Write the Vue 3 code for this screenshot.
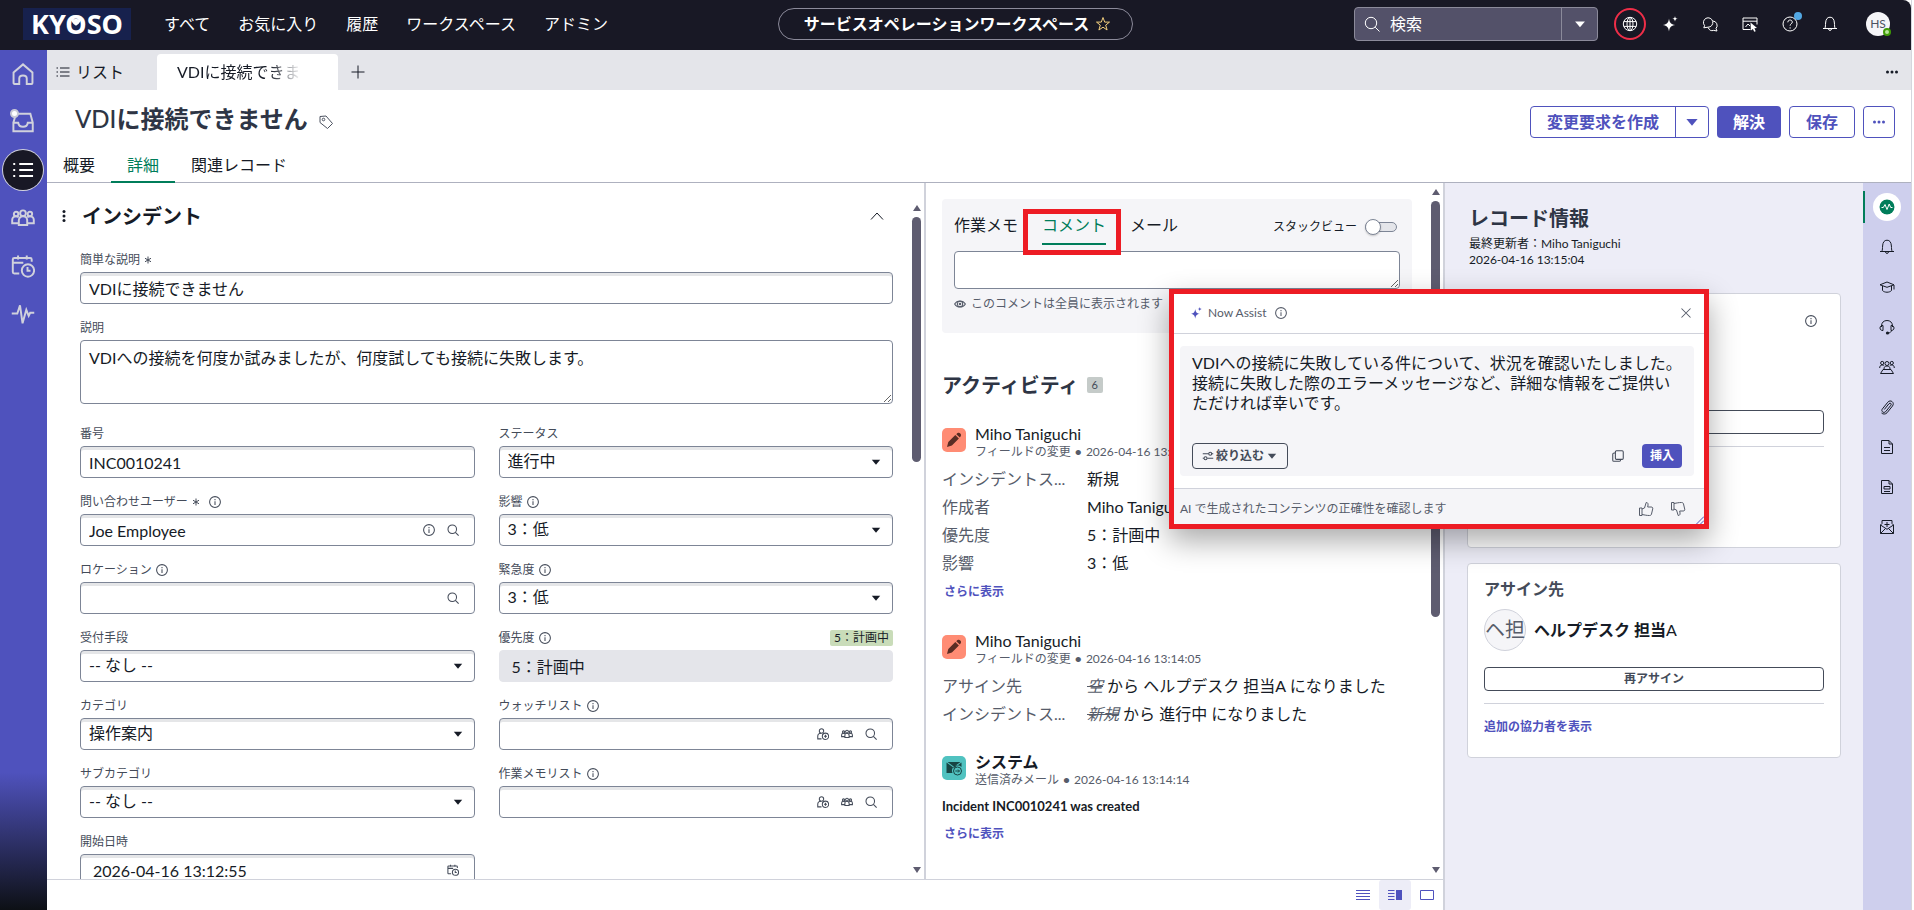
<template>
  <div class="workspace">
    <header class="topbar">
      <div class="logo">KY<span class="logo-o">O<svg class="logo-mark" viewBox="0 0 14 12"><path d="M1 0.5 L4.5 3.5 Q7 2 9.5 3.5 L13 0.5 Q13 8 7 11 Q1 8 1 0.5Z" /></svg></span>SO</div>
      <nav class="menu">
        <a v-for="m in menus" :key="m" href="#">{{ m }}</a>
      </nav>
      <button class="pill" type="button">
        サービスオペレーションワークスペース
        <Icon name="star" class="s16 gold" />
      </button>
      <div class="top-tools">
        <div class="search">
          <Icon name="search" class="s16" />
          <input type="text" placeholder="検索" aria-label="検索">
          <button class="search-more" type="button" aria-label="検索範囲"><Icon name="caret" class="s16" /></button>
        </div>
        <button class="tool ringed" type="button" aria-label="スコープ"><Icon name="globe" class="s16" /></button>
        <button v-for="t in tools" :key="t.icon" class="tool" type="button" :aria-label="t.label">
          <Icon :name="t.icon" class="s16" />
          <span v-if="t.dot" class="tool-dot"></span>
        </button>
        <button class="avatar" type="button">HS<span class="online"></span></button>
      </div>
    </header>

    <div class="shell">
      <nav class="sidebar">
        <a v-for="s in sideItems" :key="s.icon" href="#" class="side-link" :class="{ active: s.active }" :aria-label="s.label">
          <Icon :name="s.icon" class="s24" />
          <span v-if="s.dot" class="side-dot"></span>
        </a>
      </nav>

      <main class="main">
        <div class="tabbar">
          <button class="list-tab" type="button"><Icon name="list" class="s16" />リスト</button>
          <button class="record-tab" type="button"><span>VDIに接続できま</span></button>
          <button class="add-tab" type="button" aria-label="タブを追加"><Icon name="plus" class="s16" /></button>
          <button class="more-tab" type="button" aria-label="その他"><Icon name="dots" class="s16" /></button>
        </div>

        <div class="record-head">
          <div class="title-row">
            <h1><span>VDI</span>に接続できません</h1>
            <Icon name="tag" class="s16 tag-icon" />
            <div class="actions">
              <div class="split">
                <button type="button">変更要求を作成</button>
                <button type="button" class="split-caret" aria-label="その他の作成"><Icon name="caret" class="s16" /></button>
              </div>
              <button type="button" class="btn primary">解決</button>
              <button type="button" class="btn">保存</button>
              <button type="button" class="btn square" aria-label="その他"><Icon name="dots" class="s16" /></button>
            </div>
          </div>
          <div class="record-tabs">
            <button type="button">概要</button>
            <button type="button" class="active">詳細</button>
            <button type="button">関連レコード</button>
          </div>
        </div>

        <div class="body">
          <div class="left-area">
            <div class="panes">
              <section class="form-pane">
                <div class="form-scroll">
                  <div class="section-head">
                    <Icon name="vdots" class="s16" />
                    <h2>インシデント</h2>
                    <button type="button" class="plain" aria-label="折りたたむ"><Icon name="chevron" class="s16" /></button>
                  </div>
                  <div class="fields">
                    <div class="field wide">
                      <div class="label-row"><label for="short">簡単な説明</label><Icon name="required" class="s8" /></div>
                      <div class="control"><input id="short" type="text" value="VDIに接続できません"></div>
                    </div>
                    <div class="field wide">
                      <div class="label-row"><label for="desc">説明</label></div>
                      <textarea id="desc" class="desc">VDIへの接続を何度か試みましたが、何度試しても接続に失敗します。</textarea>
                    </div>
                    <div v-for="f in fields" :key="f.id" class="field">
                      <div class="label-row">
                        <label :for="f.id">{{ f.label }}</label>
                        <Icon v-if="f.required" name="required" class="s8" />
                        <Icon v-if="f.info" name="info" class="s12" :class="{ spaced: f.required }" />
                        <span v-if="f.chip" class="chip">{{ f.chip }}</span>
                      </div>
                      <div class="control" :class="f.type">
                        <template v-if="f.type === 'select'">
                          <select :id="f.id"><option>{{ f.value }}</option></select>
                          <Icon name="caret" class="s12 ink" />
                        </template>
                        <template v-else>
                          <input :id="f.id" type="text" :value="f.value" :readonly="f.type === 'readonly'">
                          <Icon v-for="i in f.icons" :key="i" :name="i" class="s12" />
                        </template>
                      </div>
                    </div>
                  </div>
                </div>
                <div class="scroll form-bar"><i class="up"></i><div class="track"><div class="thumb"></div></div><i class="down"></i></div>
              </section>

              <section class="activity-pane">
                <div class="activity-scroll">
                  <div class="compose">
                    <div class="compose-tabs">
                      <button type="button">作業メモ</button>
                      <button type="button" class="active">コメント</button>
                      <button type="button">メール</button>
                      <label class="stack">スタックビュー<input type="checkbox" role="switch"></label>
                    </div>
                    <textarea class="comment" aria-label="コメント"></textarea>
                    <p class="hint"><Icon name="eye" class="s12" />このコメントは全員に表示されます</p>
                  </div>
                  <h2 class="activity-title">アクティビティ<span>6</span></h2>
                  <article v-for="(e, n) in entries" :key="n" class="entry">
                    <header>
                      <span class="entry-icon" :class="e.icon"><Icon :name="e.icon" class="s16" /></span>
                      <div>
                        <div class="entry-name" :class="{ bold: e.bold }">{{ e.name }}</div>
                        <div class="entry-sub">{{ e.kind }} <b>•</b> {{ e.time }}</div>
                      </div>
                    </header>
                    <dl v-if="e.rows">
                      <div v-for="r in e.rows" :key="r.label">
                        <dt>{{ r.label }}</dt>
                        <dd><template v-if="r.old"><del>{{ r.old }}</del> から </template>{{ r.value }}</dd>
                      </div>
                    </dl>
                    <p v-if="e.text" class="entry-text">{{ e.text }}</p>
                    <a v-if="e.more" href="#" class="link">さらに表示</a>
                  </article>
                </div>
                <div class="scroll activity-bar"><i class="up"></i><div class="track"><div class="thumb"></div></div><i class="down"></i></div>
              </section>
            </div>
            <footer class="layout-bar">
              <button type="button" aria-label="一列"><Icon name="rows" class="s16" /></button>
              <button type="button" class="active" aria-label="分割"><Icon name="split" class="s16" /></button>
              <button type="button" aria-label="全画面"><Icon name="box" class="s16" /></button>
            </footer>
          </div>

          <aside class="info-pane">
            <h2>レコード情報</h2>
            <p>最終更新者：Miho Taniguchi<br>2026-04-16 13:15:04</p>
            <div class="card sla">
              <Icon name="info" class="s12" />
              <button type="button" class="outline" aria-label="詳細"></button>
              <hr>
            </div>
            <div class="card">
              <h3>アサイン先</h3>
              <div class="person">
                <span class="face">ヘ担</span>
                <strong>ヘルプデスク 担当<span>A</span></strong>
              </div>
              <button type="button" class="outline">再アサイン</button>
              <hr>
              <a href="#" class="link">追加の協力者を表示</a>
            </div>
          </aside>

          <nav class="rail">
            <button v-for="r in rail" :key="r.icon" type="button" :class="{ active: r.active }" :aria-label="r.label">
              <Icon :name="r.icon" class="s16" />
            </button>
          </nav>

          <div class="assist" role="dialog" aria-label="Now Assist">
            <div class="assist-head">
              <Icon name="sparkle" class="s12 violet" />
              <span>Now Assist</span>
              <Icon name="info" class="s12" />
              <button type="button" class="plain" aria-label="閉じる"><Icon name="close" class="s12" /></button>
            </div>
            <div class="assist-body">
              <p>VDIへの接続に失敗している件について、状況を確認いたしました。<br>接続に失敗した際のエラーメッセージなど、詳細な情報をご提供いただければ幸いです。</p>
              <div class="assist-actions">
                <button type="button" class="refine"><Icon name="sliders" class="s12" />絞り込む<Icon name="caret" class="s12" /></button>
                <button type="button" class="plain copy" aria-label="コピー"><Icon name="copy" class="s12" /></button>
                <button type="button" class="insert">挿入</button>
              </div>
            </div>
            <div class="assist-foot">
              <span>AI で生成されたコンテンツの正確性を確認します</span>
              <button type="button" class="plain" aria-label="良い"><Icon name="up" class="s16" /></button>
              <button type="button" class="plain" aria-label="悪い"><Icon name="downvote" class="s16" /></button>
            </div>
            <Icon name="grip" class="s8 grip" />
          </div>
        </div>
      </main>
    </div>
  </div>
</template>

<script setup>
import { h } from 'vue'

// 16x16 の線画アイコン
const icons = {
  star: '<path d="M8 1.5l1.7 4.6h4.8l-3.8 3 1.4 4.9L8 11.2 3.9 14l1.4-4.9-3.8-3h4.8z"/>',
  search: '<circle cx="7" cy="7" r="5.7"/><path d="M11.2 11.2l4.300 4.300"/>',
  caret: '<path class="fill" d="M2.4 5h11.200L8 11.8z"/>',
  globe: '<circle cx="8" cy="8" r="6.7"/><ellipse cx="8" cy="8" rx="3" ry="6.7"/><path d="M8 1.3v13.4M1.8 5.6h12.4M1.8 10.4h12.4"/>',
  sparkle: '<path class="fill" d="M7 2.5C7.6 6.6 8.9 8.3 13.2 9 8.9 9.7 7.6 11.4 7 15.5 6.4 11.4 5.1 9.7.8 9 5.1 8.3 6.4 6.6 7 2.5zM13 0c.3 1.8.8 2.5 2.8 2.800-2 .3-2.500 1-2.800 2.800-.3-1.800-.8-2.500-2.800-2.800 2-.3 2.500-1 2.800-2.800z"/>',
  chats: '<path d="M2.600 9.600A4.700 4.700 0 1 1 6 11.200l-4.200.6z"/><path d="M10.800 5a4.500 4.500 0 0 1 3.200 7.500l1 2.500-3.300-.6a4.500 4.500 0 0 1-5.500-2.800"/>',
  pointer: '<path d="M8.500 13.500H1V2h14v6.500M1 5.200h14M3.500 11l2.500-3 2 2"/><path class="fill" d="M8.500 6.500l6.500 5.500-2.600.3 1.300 2.900-1.500.6-1.300-2.800-2 1.600z"/>',
  help: '<circle cx="8" cy="8" r="7"/><path d="M5.800 6.300c0-3 4.500-3 4.500-.2 0 1.700-2.200 1.700-2.200 3.600M8.100 11.300v1.300"/>',
  bell: '<path d="M1 12.500h14M2.800 12.500c.8-1.500.6-3.500.8-5.500C3.800 3.200 5.300 1.200 8 1.200S12.200 3.200 12.400 7c.2 2 0 4 .8 5.500M6.500 13c.2 1.900 2.800 1.900 3 0"/>',
  home: '<path d="M1.700 7L8 1.600 14.300 7v7c0 .4-.2.600-.6.600H10.500V11c0-1.300-.9-2-2.500-2s-2.500.7-2.500 2v3.600H2.300c-.4 0-.6-.2-.6-.6z"/>',
  inbox: '<path d="M3.300 2.500h9.600l1.600 6v5.700H1.600V8.500h3.200c.3 2 1.300 2.700 3.200 2.700s2.900-.7 3.200-2.700h3.300M3 3.500L1.600 8.500"/>',
  menu: '<path d="M5.500 4h9.200M5.500 8h9.200M5.500 12h9.200M1.500 4h1.300M1.500 8h1.300M1.500 12h1.300"/>',
  list: '<path d="M5 4h9.500M5 8h9.500M5 12h9.500M1.500 4H3M1.500 8H3M1.500 12H3"/>',
  people: '<circle cx="8" cy="4.800" r="1.900"/><circle cx="3.400" cy="5.300" r="1.500"/><circle cx="12.600" cy="5.300" r="1.500"/><path d="M5.200 12.600V9.700C5.200 7.900 6.300 6.900 8 6.900s2.800 1 2.800 2.800v2.900zM5 11.500H.8V9.400C.8 7.700 1.800 6.900 3.400 6.900c.8 0 1.300.2 1.700.6M11 11.500h4.200V9.400c0-1.700-1-2.500-2.600-2.500-.8 0-1.300.2-1.700.6"/>',
  calendar: '<path d="M5.500 13H2.200c-.7 0-1-.3-1-1V3.700c0-.7.300-1 1-1h10.600c.7 0 1 .3 1 1v1.500M1.200 5.800h7M4.700 1v2.700M10.500 1v2.700"/><circle cx="11.300" cy="11" r="4.100"/><path d="M11 8.700v2.500h2"/>',
  pulse: '<path d="M.5 7.700h3.700L6 2.200l1.700 12 2.500-9 1.600 4 1-2h2.700"/>',
  plus: '<path d="M8 1.500v13M1.500 8h13"/>',
  dots: '<g class="fill"><circle cx="3.500" cy="8" r="1.500"/><circle cx="8" cy="8" r="1.500"/><circle cx="12.500" cy="8" r="1.500"/></g>',
  vdots: '<g class="fill"><circle cx="8" cy="3.500" r="1.500"/><circle cx="8" cy="8" r="1.500"/><circle cx="8" cy="12.500" r="1.500"/></g>',
  tag: '<path d="M2 2.500l6-.5 6.500 7.500-5 5L2 8.500z"/><circle cx="5.500" cy="5.500" r="1.300"/>',
  chevron: '<path d="M2 11.500l6-6.500 6 6.500"/>',
  required: '<path d="M8 1v14M2 4.500l12 7M14 4.500l-12 7"/>',
  info: '<circle cx="8" cy="8" r="7.200"/><path d="M8 7v5M8 4v1.600"/>',
  adduser: '<circle cx="6" cy="4" r="2.900"/><path d="M6 14.500H1V11c0-2.500 1.500-4 4.500-4M8 7l1 .5"/><circle cx="11.300" cy="11" r="4.200"/><path d="M9.300 11h4M11.300 9v4"/>',
  eye: '<path d="M.8 8C4 2.500 12 2.500 15.200 8 12 13.500 4 13.500.8 8z"/><circle cx="8" cy="8" r="3.600"/><circle cx="8" cy="8" r="1"/>',
  pencil: '<path class="fill" d="M1 15l1.300-5 7-7 3.600 3.600-7 7zM10.300 2.200C12 .3 13.300.5 14.300 1.500s1.200 2.300-.5 4z"/>',
  mail: '<path class="fill" d="M.5 2.500L8 8l7.500-5.500V7A5.500 5.500 0 0 0 6.500 13H.5zM1.500 2h13L8 6.800z"/><circle cx="11.500" cy="11" r="4"/><path d="M9.300 11h4M12 9.500l1.500 1.500-1.500 1.500"/>',
  rows: '<path d="M1 3.500h14M1 6.500h14M1 9.500h14M1 12.500h14"/>',
  split: '<path d="M1 3.500h6.500M1 6.500h6.500M1 9.500h6.500M1 12.500h6.500"/><path class="fill" d="M9 3h6v10H9z"/>',
  box: '<path d="M1.500 3.500h13v9h-13z"/>',
  close: '<path d="M2 2l12 12M14 2L2 14"/>',
  sliders: '<path d="M1 5h8M13 5h2M1 11h1.500M7 11h8"/><circle cx="11" cy="5" r="2"/><circle cx="4.700" cy="11" r="2"/>',
  copy: '<rect x="4.500" y="1" width="10.500" height="11.500" rx="1.500"/><path d="M4.500 4H3C1.700 4 1 4.700 1 6v7.500C1 14.600 1.500 15 2.500 15H10c1 0 1.500-.7 1.500-2.500"/>',
  up: '<path d="M1.500 7H4v7.500H1.500zM4 8l2.500-1 1.700-5.500c1.800 0 2.300 1.300 1.500 4.500H13c1.500 0 2 .7 1.700 2l-1.200 5c-.2 1-.8 1.500-2 1.500-3 0-4.500-.5-7.500-1"/>',
  downvote: '<path d="M1.500 9H4V1.500H1.500zM4 8l2.500 1 1.700 5.500c1.800 0 2.300-1.300 1.500-4.500H13c1.500 0 2-.7 1.700-2l-1.200-5c-.2-1-.8-1.500-2-1.500-3 0-4.500.5-7.500 1"/>',
  grip: '<path d="M1 16L16 1M9 16l7-7"/>',
  beat: '<circle class="fill" cx="8" cy="8" r="7.500"/><path class="beat" d="M2.500 8.500h1.800L6 5.500l2 5 2.200-5.500 1.500 3.500h1.800"/>',
  cap: '<path d="M1 5.800L8 3l7 2.800L8 8.300z"/><path d="M3.500 7v4.500c2 2.300 7 2.300 9 0V7M15 6v4.500"/>',
  headset: '<path d="M2.500 8V7C2.500 3.500 4.800 1.500 8 1.500s5.500 2 5.500 5.500v1M4 6.500v5c-1.800 0-3-.8-3-2.500s1.200-2.500 3-2.500zM12 6.500v5c1.800 0 3-.8 3-2.500s-1.200-2.500-3-2.500zM12.500 11.500c-.5 1.700-1.500 2.500-3.500 2.500"/><circle class="fill" cx="8.500" cy="14" r="1.600"/>',
  team: '<circle cx="8" cy="4.500" r="2"/><circle cx="3.200" cy="4" r="1.600"/><circle cx="12.800" cy="4" r="1.600"/><path d="M5 10c0-2 1-3 3-3s3 1 3 3M.7 9C.7 7 1.600 6 3.200 6c1 0 1.600.3 2 .8M15.300 9c0-2-.9-3-2.500-3-1 0-1.600.3-2 .8M4 10.500h8l2.500 4h-13z"/>',
  clip: '<path d="M5.300 10.500l4.700-5.800c1.200-1.400 3 .1 1.900 1.500L6.800 12.500c-2 2.300-5.300-.2-3.400-2.600L8.800 3.200c2.700-3.200 7.300.4 4.700 3.800L8 13.800c-1.500 1.600-4 1.600-5.500.2"/>',
  doc: '<path d="M2.500 1.500H10l3.500 3.500v9.500h-11zM10 1.500V5h3.500M5 8.500h6M5 11.500h6"/>',
  form: '<path d="M2.500 1.500H10l3.500 3.500v9.500h-11zM10 1.500V5h3.500M5 7.500h6v2.500H5zM5 12.500h6"/>',
  envelope: '<path d="M1.500 6v8.500h13V6M1.500 6L3 4.500v-3h10v3L14.500 6 8 10.300zM1.500 14.500l5-5M14.500 14.500l-5-5M8 3v5M5.500 5.500h5"/>',
}

const Icon = (props) => h('svg', { viewBox: '0 0 16 16', class: 'icon', 'aria-hidden': 'true', innerHTML: icons[props.name] })
Icon.props = ['name']

const menus = ['すべて', 'お気に入り', '履歴', 'ワークスペース', 'アドミン']

const tools = [
  { icon: 'sparkle', label: 'Now Assist' },
  { icon: 'chats', label: 'チャット' },
  { icon: 'pointer', label: 'ガイド' },
  { icon: 'help', label: 'ヘルプ', dot: true },
  { icon: 'bell', label: '通知' },
]

const sideItems = [
  { icon: 'home', label: 'ホーム' },
  { icon: 'inbox', label: '受信トレイ', dot: true },
  { icon: 'menu', label: 'リスト', active: true },
  { icon: 'people', label: 'チーム' },
  { icon: 'calendar', label: 'スケジュール' },
  { icon: 'pulse', label: '分析' },
]

const fields = [
  { id: 'number', label: '番号', type: 'text', value: 'INC0010241' },
  { id: 'state', label: 'ステータス', type: 'select', value: '進行中' },
  { id: 'caller', label: '問い合わせユーザー', type: 'text', value: 'Joe Employee', required: true, info: true, icons: ['info', 'search'] },
  { id: 'impact', label: '影響', type: 'select', value: '3：低', info: true },
  { id: 'location', label: 'ロケーション', type: 'text', value: '', info: true, icons: ['search'] },
  { id: 'urgency', label: '緊急度', type: 'select', value: '3：低', info: true },
  { id: 'channel', label: '受付手段', type: 'select', value: '-- なし --' },
  { id: 'priority', label: '優先度', type: 'readonly', value: '5：計画中', info: true, chip: '5：計画中' },
  { id: 'category', label: 'カテゴリ', type: 'select', value: '操作案内' },
  { id: 'watch', label: 'ウォッチリスト', type: 'text', value: '', info: true, icons: ['adduser', 'people', 'search'] },
  { id: 'sub', label: 'サブカテゴリ', type: 'select', value: '-- なし --' },
  { id: 'worknotes', label: '作業メモリスト', type: 'text', value: '', info: true, icons: ['adduser', 'people', 'search'] },
  { id: 'opened', label: '開始日時', type: 'date', value: '2026-04-16 13:12:55', icons: ['calendar'] },
]

const entries = [
  {
    icon: 'pencil', name: 'Miho Taniguchi', kind: 'フィールドの変更', time: '2026-04-16 13:14:14', more: true,
    rows: [
      { label: 'インシデントス...', value: '新規' },
      { label: '作成者', value: 'Miho Taniguchi' },
      { label: '優先度', value: '5：計画中' },
      { label: '影響', value: '3：低' },
    ],
  },
  {
    icon: 'pencil', name: 'Miho Taniguchi', kind: 'フィールドの変更', time: '2026-04-16 13:14:05',
    rows: [
      { label: 'アサイン先', old: '空', value: 'ヘルプデスク 担当A になりました' },
      { label: 'インシデントス...', old: '新規', value: '進行中 になりました' },
    ],
  },
  { icon: 'mail', name: 'システム', bold: true, kind: '送信済みメール', time: '2026-04-16 13:14:14', text: 'Incident INC0010241 was created', more: true },
]

const rail = [
  { icon: 'beat', label: 'レコード情報', active: true },
  { icon: 'bell', label: '通知' },
  { icon: 'cap', label: 'ナレッジ' },
  { icon: 'headset', label: 'エージェントアシスト' },
  { icon: 'team', label: 'チーム' },
  { icon: 'clip', label: '添付ファイル' },
  { icon: 'doc', label: 'テンプレート' },
  { icon: 'form', label: 'フォーム' },
  { icon: 'envelope', label: 'メール作成' },
]
</script>

<style>
body { background: #fff; }
.icon { display: block; flex: none; fill: none; stroke: currentColor; stroke-width: 1; }
.icon .fill { fill: currentColor; stroke: none; }
.icon .beat { stroke: #fff; }
</style>

<style scoped>
* { box-sizing: border-box; }
.workspace {
  height: 100vh;
  margin-right: 2px;
  border-right: 1px solid #d5d6dd;
  display: flex;
  flex-direction: column;
  overflow: hidden;
  color: #161b26;
  font: 16px/20px Lato, "Noto Sans CJK JP", sans-serif;
}
button, input, select, textarea { font: inherit; color: inherit; margin: 0; }
button { padding: 0; border: 0; background: none; cursor: pointer; }
h1, h2, h3, p, dl, dd { margin: 0; }
a { text-decoration: none; color: inherit; }
.s8 { width: 8px; height: 8px; stroke-width: 2; }
.s12 { width: 12px; height: 12px; stroke-width: 1.4; }
.s16 { width: 16px; height: 16px; }
.s24 { width: 24px; height: 24px; stroke-width: 1.3; }
.gold { color: #f3cf7d; }
.ink { color: #161b26; }
.violet { color: #4f52bd; }

.topbar {
  flex: none;
  height: 50px;
  padding: 0 18px 2px;
  background: #181825;
  border-top-right-radius: 8px;
  color: #fff;
  display: grid;
  grid-template-columns: 1fr auto 1fr;
  grid-template-areas: "left pill right";
  align-items: center;
}
.logo {
  grid-area: left;
  width: 108px;
  height: 32px;
  margin-left: 5px;
  background: #17214d;
  text-align: center;
  font: 700 27px/32px "Noto Sans", sans-serif;
}
.logo-o { position: relative; }
.logo-mark { position: absolute; left: 5px; top: 11px; width: 12px; height: 11px; fill: #fff; }
.menu { grid-area: left; display: flex; gap: 28px; margin-left: 146px; white-space: nowrap; }
.pill {
  grid-area: pill;
  height: 32px;
  padding: 0 21px 0 25px;
  border: 1px solid #8b8a9a;
  border-radius: 16px;
  font-weight: 700;
  display: flex;
  align-items: center;
  gap: 6px;
}
.top-tools { grid-area: right; display: flex; align-items: center; justify-content: flex-end; gap: 8px; }
.search {
  width: 244px;
  height: 34px;
  margin-right: 8px;
  padding-left: 9px;
  border: 1px solid #8b8a9a;
  border-radius: 4px;
  background: #535169;
  display: flex;
  align-items: center;
}
.search input { flex: 1; min-width: 0; padding: 0 10px; border: 0; background: none; outline: 0; }
.search input::placeholder { color: #fff; opacity: 1; }
.search-more { width: 36px; height: 32px; border-left: 1px solid #8b8a9a; display: grid; place-items: center; }
.search-more .icon { width: 14px; height: 14px; }
.tool { position: relative; width: 32px; height: 32px; display: grid; place-items: center; }
.ringed { border: 2px solid #ee2e48; border-radius: 50%; }
.tool-dot { position: absolute; right: 4px; top: 4px; width: 8px; height: 8px; border-radius: 50%; background: #52a7e3; }
.avatar {
  position: relative;
  width: 24px;
  height: 24px;
  margin: 0 3px 0 12px;
  border-radius: 50%;
  background: #f5f5f8;
  color: #4c5260;
  font-size: 12px;
}
.online { position: absolute; right: -1px; bottom: 0; width: 8px; height: 8px; border-radius: 50%; border: 2px solid #3f9c05; background: #b8e59a; }

.shell { flex: 1; min-height: 0; display: flex; }
.sidebar {
  flex: none;
  width: 47px;
  background: linear-gradient(#4f52bd 0, #4f52bd 84%, #0d1015 100%);
  color: #d0d1dc;
  display: flex;
  flex-direction: column;
  align-items: center;
  gap: 8px;
  padding: 4px 1px 0 0;
}
.side-link { position: relative; width: 40px; height: 40px; border-radius: 50%; display: grid; place-items: center; }
.side-link.active { background: #181825; box-shadow: 0 0 0 1px #d0d1dc; color: #fff; }
.side-dot { position: absolute; left: 7px; top: 7px; width: 9px; height: 9px; border-radius: 50%; background: #fff; border: 2px solid #c9c9d6; }

.main { flex: 1; min-width: 0; display: flex; flex-direction: column; }
.tabbar { flex: none; height: 40px; background: #e4e5ea; display: flex; align-items: flex-end; }
.tabbar button { height: 36px; display: flex; align-items: center; }
.list-tab { width: 110px; padding-left: 8px; gap: 5px; }
.record-tab { width: 181px; padding: 0 20px; background: #fff; border-radius: 4px 4px 0 0; }
.record-tab span {
  width: 124px;
  white-space: nowrap;
  text-align: left;
  -webkit-mask-image: linear-gradient(90deg, #000 75%, transparent);
  mask-image: linear-gradient(90deg, #000 75%, transparent);
}
.add-tab { width: 40px; justify-content: center; }
.more-tab { margin-left: auto; width: 38px; justify-content: center; }

.record-head { flex: none; border-bottom: 1px solid #aeb1bf; }
.title-row { height: 60px; padding: 4px 16px 0 28px; display: flex; align-items: center; }
h1 { margin-bottom: 6px; font-size: 24px; line-height: 32px; font-weight: 700; color: #2e3545; }
h1 span { font-weight: 500; }
.tag-icon { margin-left: 10px; color: #4c5260; }
.actions { margin-left: auto; display: flex; gap: 8px; color: #4f52bd; }
.split { display: flex; border: 1px solid #4f52bd; border-radius: 4px; height: 32px; }
.split button { padding: 0 16px; font-weight: 700; }
.split .split-caret { padding: 0 8px; border-left: 1px solid #4f52bd; }
.btn { height: 32px; padding: 0 16px; border: 1px solid #4f52bd; border-radius: 4px; font-weight: 700; }
.btn.primary { border: 0; background: #4f52bd; color: #fff; }
.btn.square { width: 32px; padding: 0; display: grid; place-items: center; }
.record-tabs { height: 32px; display: flex; }
.record-tabs button { height: 33px; padding: 0 16px 2px; border-bottom: 2px solid transparent; }
.record-tabs .active { color: #007d5a; border-color: #007d5a; }

.body { position: relative; flex: 1; min-height: 0; display: flex; }
.left-area { flex: 1; min-width: 0; display: flex; flex-direction: column; }
.panes { flex: 1; min-height: 0; display: flex; }
.form-pane { flex: 1; min-width: 0; display: flex; }
.form-scroll { flex: 1; min-width: 0; overflow: hidden; padding-right: 19px; }
.section-head { height: 65px; padding: 0 8px 0 9px; display: flex; align-items: center; }
.section-head .plain { margin-left: auto; color: #161b26; }
h2 { font-size: 20px; line-height: 24px; font-weight: 700; }
.section-head h2 { margin-left: 10px; }
.plain { display: grid; place-items: center; }
.fields { padding-left: 33px; display: grid; grid-template-columns: 1fr 1fr; column-gap: 24px; row-gap: 12px; }
.wide { grid-column: 1 / -1; }
.label-row { height: 24px; display: flex; align-items: center; gap: 4px; font-size: 12px; line-height: 16px; color: #444b59; }
.spaced { margin-left: 5px; }
.chip { margin-left: auto; padding: 0 4px; border-radius: 2px; background: #c9dcb9; color: #161b26; }
.control {
  height: 32px;
  padding: 0 15px 0 8px;
  border: 1px solid #7d8596;
  border-radius: 4px;
  box-shadow: inset 0 3px #e5e6e8;
  display: flex;
  align-items: center;
  gap: 12px;
  color: #444b59;
}
.control input, .control select { flex: 1; min-width: 0; height: 28px; padding: 0; border: 0; background: none; outline: 0; color: #161b26; appearance: none; }
.control select { padding-bottom: 2px; }
.control.select { padding-right: 10px; }
.control.date { padding-left: 12px; }
.control.readonly { padding-left: 12px; background: #e4e5ea; border-color: #e4e5ea; box-shadow: none; }
textarea { display: block; width: 100%; border: 1px solid #7d8596; border-radius: 4px; outline: 0; background: #fff; }
.desc { height: 64px; padding: 7px 8px; margin-bottom: 6px; }

.scroll { flex: none; width: 12px; padding: 6px 3px 6px 0; display: flex; flex-direction: column; align-items: center; }
.form-bar { padding-top: 22px; }
.scroll i { border: 4px solid transparent; }
.scroll .up { border-top: 0; border-bottom: 6px solid #5e5c70; }
.scroll .down { border-bottom: 0; border-top: 6px solid #5e5c70; }
.track { flex: 1; width: 9px; margin: 6px 0; }
.thumb { height: 63%; border-radius: 5px; background: #5e5c70; }
.form-bar .thumb { height: 38%; }

.activity-pane { flex: none; width: 519px; border-left: 2px solid #d0d2db; display: flex; }
.activity-scroll { flex: 1; min-width: 0; overflow: hidden; padding: 16px 19px 0 16px; }
.compose { height: 134px; padding: 8px 12px; border-radius: 4px; background: #f5f5f8; }
.compose-tabs { height: 44px; display: flex; align-items: flex-start; gap: 24px; }
.compose-tabs button { position: relative; height: 38px; border-bottom: 2px solid transparent; }
.compose-tabs .active { color: #007d5a; border-color: #007d5a; }
.compose-tabs .active::after { content: ""; position: absolute; inset: 2px -15px -12px -19px; border: 5px solid #ed1c24; }
.stack { height: 40px; margin-left: auto; display: flex; align-items: center; gap: 8px; font-size: 12px; }
.stack input {
  appearance: none;
  position: relative;
  width: 32px;
  height: 10px;
  margin: 0 3px 0 0;
  border: 1px solid #7d8596;
  border-radius: 5px;
  background: #e4e5ea;
}
.stack input::before {
  content: "";
  position: absolute;
  left: -1px;
  top: -4px;
  width: 16px;
  height: 16px;
  box-sizing: border-box;
  border: 1px solid #7d8596;
  border-radius: 50%;
  background: #fff;
  box-shadow: 0 1px 2px #0003;
}
.comment { height: 38px; }
.hint { margin-top: 5px; display: flex; align-items: center; gap: 5px; font-size: 12px; color: #565c6a; }
.activity-title { margin: 40px 0 27px; display: flex; align-items: center; gap: 8px; color: #2e3545; }
.activity-title span { width: 16px; height: 16px; border-radius: 2px; background: #c5cbc9; font: 11px/16px Lato; text-align: center; color: #444b59; }
.entry { margin-bottom: 24px; }
.entry header { height: 36px; display: flex; gap: 9px; }
.entry-icon { width: 24px; height: 24px; margin-top: 4px; border-radius: 5px; display: grid; place-items: center; background: #ff8c74; color: #5a2d24; }
.entry-icon.mail { background: #50c2c0; color: #174544; }
.entry-name.bold { font-weight: 700; }
.entry-sub { font-size: 12px; line-height: 16px; color: #565c6a; }
.entry-sub b { margin: 0 1px; }
dl > div { display: flex; height: 28px; align-items: center; }
dl { padding-top: 5px; }
dt { width: 126px; margin-right: 19px; white-space: nowrap; color: #565c6a; }
dd { white-space: nowrap; }
del { font-style: italic; color: #565c6a; }
.entry-text { padding: 8px 0 3px; font-size: 13px; font-weight: 700; }
.link { display: block; font-size: 12px; line-height: 16px; font-weight: 700; color: #4f52bd; }
.entry .link { margin: 7px 0 31px 2px; }

.layout-bar { flex: none; height: 31px; border-top: 1px solid #d0d2db; display: flex; justify-content: flex-end; }
.layout-bar button { width: 32px; display: grid; place-items: center; color: #4f52bd; }
.layout-bar .active { background: #ededf7; border-radius: 3px; }

.info-pane { flex: none; width: 420px; padding: 23px 22px 0; border-left: 2px solid #d0d2db; background: #ededf7; }
.info-pane h2 { margin: 0 0 6px 2px; color: #2e3545; }
.info-pane p { margin-left: 2px; font-size: 12px; line-height: 16px; }
.card { margin-top: 15px; padding: 15px 16px; min-height: 195px; border: 1px solid #d0d2db; border-radius: 4px; background: #fff; }
.sla { min-height: 255px; margin-top: 25px; padding-top: 21px; }
.sla .icon { margin: 0 7px 0 auto; color: #444b59; }
.sla .outline { margin-top: 83px; }
.card h3 { font-size: 16px; line-height: 20px; font-weight: 700; color: #444b59; }
.person { display: flex; align-items: center; gap: 8px; margin: 10px 0 16px; }
.face { width: 42px; height: 42px; border: 1px solid #d0d2db; border-radius: 50%; background: #f5f5f8; font-size: 20px; line-height: 38px; text-align: center; white-space: nowrap; color: #565c6a; }
.person strong span { font-weight: 400; }
.outline { width: 100%; height: 24px; display: block; border: 1px solid #444b59; border-radius: 4px; font-size: 12px; font-weight: 700; line-height: 16px; color: #444b59; }
hr { margin: 12px 0 15px; border: 0; border-top: 1px solid #d0d2db; }

.rail { flex: none; width: 48px; padding-top: 4px; background: #cecfed; display: flex; flex-direction: column; }
.rail button { height: 40px; display: grid; place-items: center; }
.rail .active { height: 32px; margin: 4px 0; border-left: 2px solid #007d5a; padding-right: 2px; color: #007d5a; }
.rail .active .icon { padding: 6px; width: 28px; height: 28px; border-radius: 50%; background: #fff; }

/* 入力欄の上に重なる生成結果パネル */
.assist {
  position: absolute;
  top: 106px;
  right: 202px;
  width: 540px;
  border: 5px solid #ed1c24;
  background: #fff;
  box-shadow: 0 12px 28px #0005;
  color: #444b59;
}
.assist-head { height: 40px; padding: 0 12px 2px 16px; border-bottom: 1px solid #d0d2db; display: flex; align-items: center; gap: 6px; font-size: 12px; color: #565c6a; }
.assist-head span + .icon { margin-left: 3px; }
.assist-head .plain { margin-left: auto; }
.assist-body { margin: 12px 10px 12px 6px; padding: 7px 12px; border-radius: 4px; background: #f5f5f8; color: #161b26; }
.assist-actions { margin-top: 30px; display: flex; align-items: center; color: #444b59; }
.refine { height: 26px; padding: 0 9px; border: 1px solid #444b59; border-radius: 4px; display: flex; align-items: center; gap: 2px; font-size: 12px; font-weight: 700; }
.copy { margin-left: auto; }
.insert { margin-left: 18px; width: 40px; height: 24px; border-radius: 4px; background: #4f52bd; color: #fff; font-size: 12px; font-weight: 700; }
.assist-foot { height: 36px; padding: 4px 18px 0 6px; border-top: 1px solid #d0d2db; background: #f5f5f8; display: flex; align-items: center; gap: 16px; font-size: 12px; color: #565c6a; }
.assist-foot span { margin-right: auto; }
.grip { position: absolute; right: 0; bottom: 0; color: #4f52bd; }
</style>
